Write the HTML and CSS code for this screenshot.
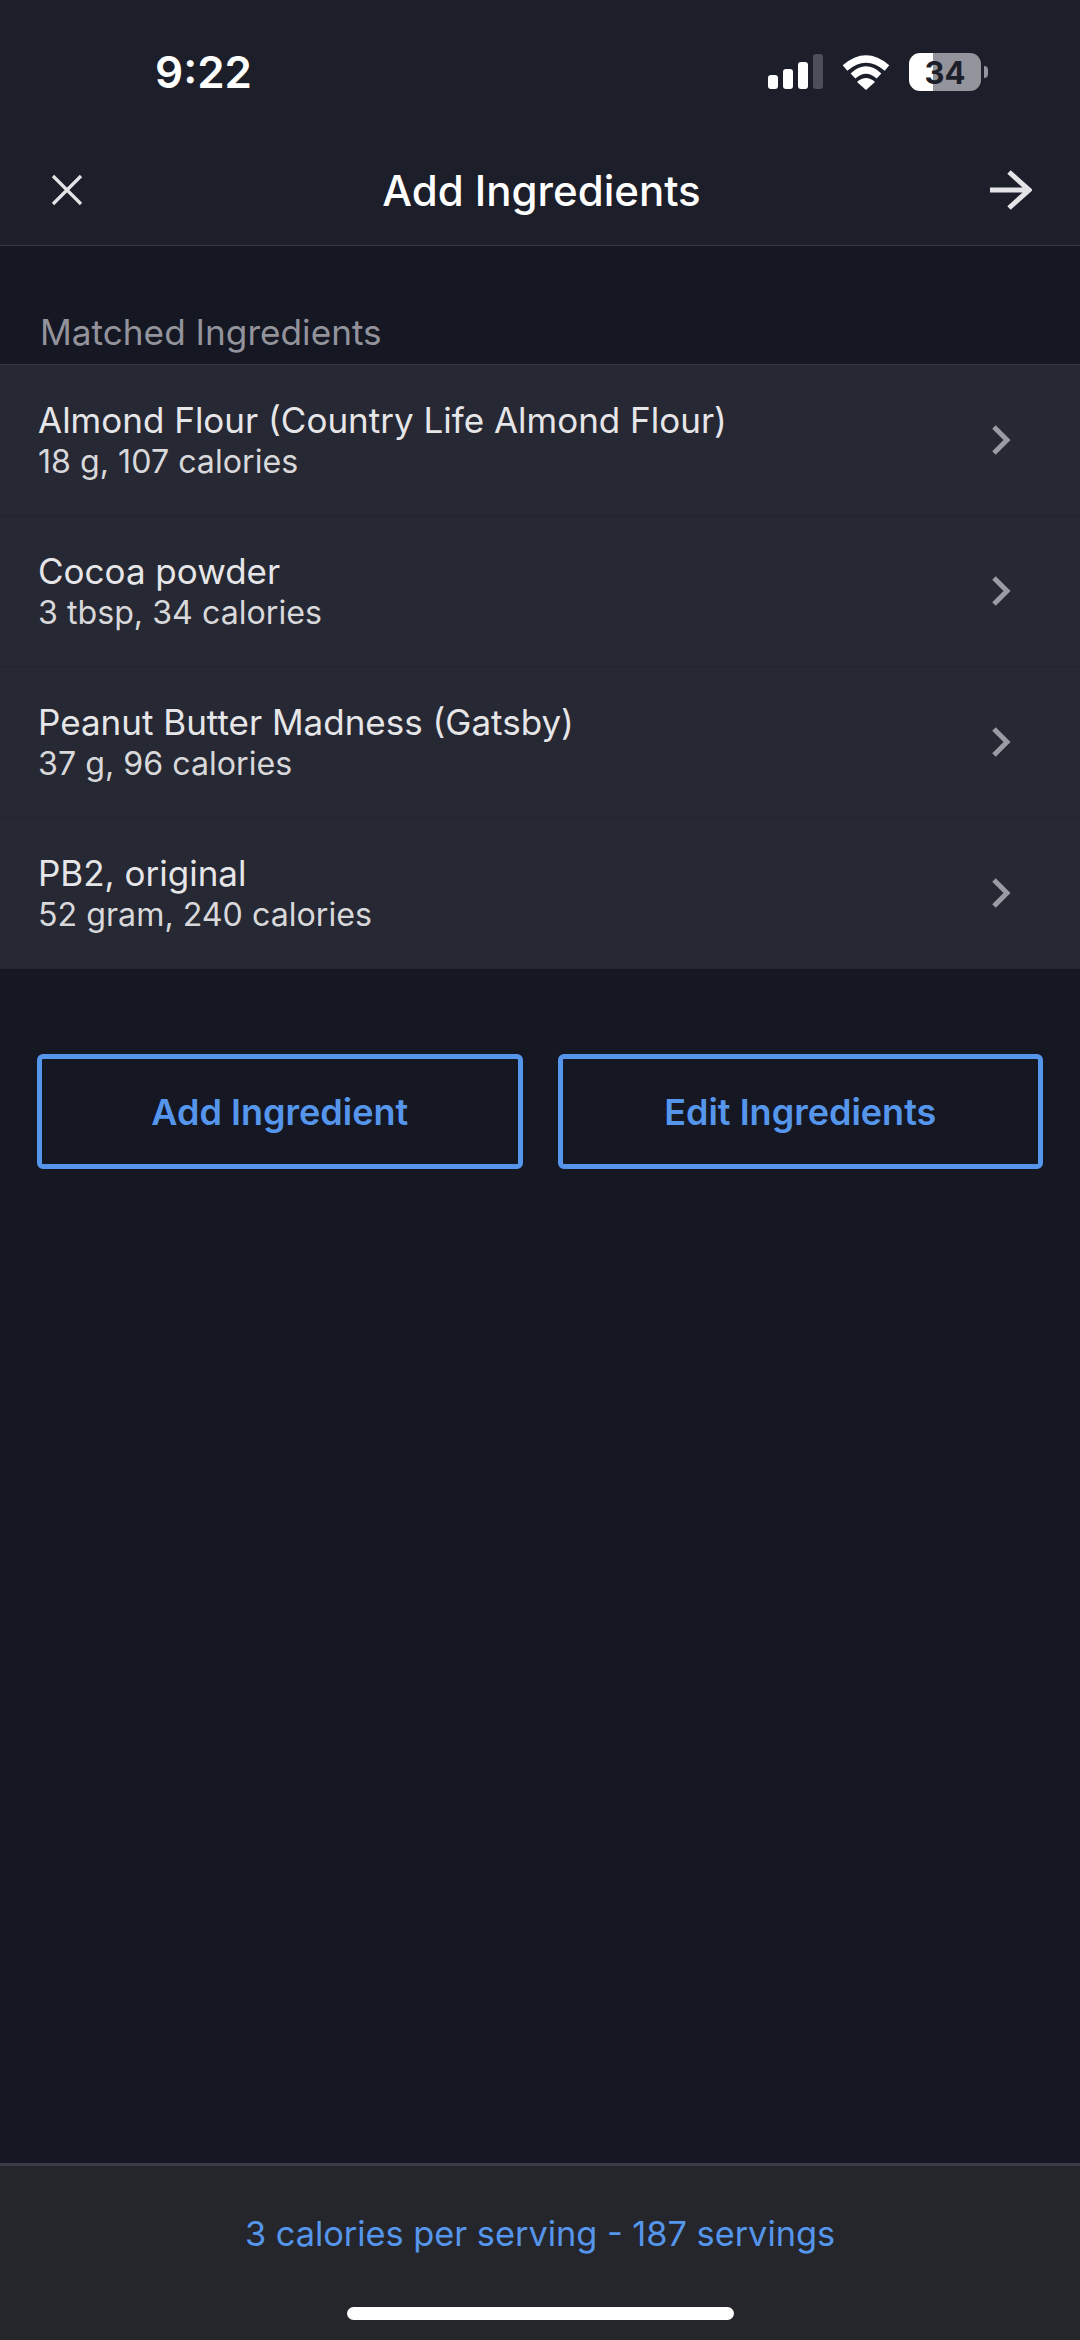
FILE: index.html
```html
<!DOCTYPE html>
<html lang="en">
    <head>
        <meta charset="utf-8">
        <meta name="viewport" content="width=device-width, initial-scale=1.0">
        <title>Add Ingredients</title>
        <link rel="stylesheet" href="styles.css">
    </head>
    <body>
        <header class="top">
            <div class="status">
                <span class="time">9:22</span>
                <div class="status-icons">
                    <svg class="signal" width="55" height="36" viewBox="0 0 55 36">
                        <rect x="0" y="21" width="10" height="14" rx="3" fill="#fff"/>
                        <rect x="15" y="15" width="10" height="20" rx="3" fill="#fff"/>
                        <rect x="30" y="8" width="10" height="27" rx="3" fill="#fff"/>
                        <rect x="45" y="0" width="10" height="35" rx="3" fill="#4d4e59"/>
                    </svg>
                    <svg class="wifi" width="48" height="36" viewBox="0 0 48 36">
                        <path d="M3 14 Q24 -4 45 14" fill="none" stroke="#fff" stroke-width="7"/>
                        <path d="M11 22 Q24 10 37 22" fill="none" stroke="#fff" stroke-width="7"/>
                        <path d="M15 28 Q24 20 33 28 L24 36 Z" fill="#fff"/>
                    </svg>
                    <div class="battery">
                        <div class="battery-body"><span>34</span></div>
                        <div class="battery-cap"></div>
                    </div>
                </div>
            </div>
            <nav class="nav">
                <svg class="nav-close" width="32" height="32" viewBox="0 0 32 32">
                    <path d="M2 2 L30 30 M30 2 L2 30" stroke="#e4e4e7" stroke-width="3.2" fill="none"/>
                </svg>
                <h1>Add Ingredients</h1>
                <svg class="nav-next" width="42" height="40" viewBox="0 0 42 40">
                    <path d="M0 20 H39 M19 2 L39 20 L19 38" stroke="#e4e4e7" stroke-width="5" fill="none"/>
                </svg>
            </nav>
        </header>
        <main class="content">
            <h2 class="section-title">Matched Ingredients</h2>
            <ul class="list">
                <li class="row">
                    <div>
                        <p class="name">Almond Flour (Country Life Almond Flour)</p>
                        <p class="detail">18 g, 107 calories</p>
                    </div>
                    <svg class="chevron" width="20" height="32" viewBox="0 0 20 32">
                        <path d="M3 3 L16 16 L3 29" stroke="#9a9ba3" stroke-width="5" fill="none"/>
                    </svg>
                </li>
                <li class="row">
                    <div>
                        <p class="name">Cocoa powder</p>
                        <p class="detail">3 tbsp, 34 calories</p>
                    </div>
                    <svg class="chevron" width="20" height="32" viewBox="0 0 20 32">
                        <path d="M3 3 L16 16 L3 29" stroke="#9a9ba3" stroke-width="5" fill="none"/>
                    </svg>
                </li>
                <li class="row">
                    <div>
                        <p class="name">Peanut Butter Madness (Gatsby)</p>
                        <p class="detail">37 g, 96 calories</p>
                    </div>
                    <svg class="chevron" width="20" height="32" viewBox="0 0 20 32">
                        <path d="M3 3 L16 16 L3 29" stroke="#9a9ba3" stroke-width="5" fill="none"/>
                    </svg>
                </li>
                <li class="row">
                    <div>
                        <p class="name">PB2, original</p>
                        <p class="detail">52 gram, 240 calories</p>
                    </div>
                    <svg class="chevron" width="20" height="32" viewBox="0 0 20 32">
                        <path d="M3 3 L16 16 L3 29" stroke="#9a9ba3" stroke-width="5" fill="none"/>
                    </svg>
                </li>
            </ul>
            <div class="actions">
                <button class="action">Add Ingredient</button>
                <button class="action">Edit Ingredients</button>
            </div>
        </main>
        <footer class="summary">
            <p>3 calories per serving - 187 servings</p>
            <div class="home-bar"></div>
        </footer>
    </body>
</html>
```

FILE: styles.css
```css
* {
    box-sizing: border-box;
    margin: 0;
    padding: 0;
}
body {
    width: 1080px;
    height: 2340px;
    display: flex;
    flex-direction: column;
    overflow: hidden;
    font-family: Inter, "Liberation Sans", sans-serif;
    background: #151723;
}
.top {
    height: 246px;
    background: #1c1e2a;
    border-bottom: 1px solid #353743;
}
.status {
    height: 144px;
    padding: 0 92px 0 155px;
    display: flex;
    justify-content: space-between;
    align-items: center;
}
.time {
    font-size: 44px;
    font-weight: 600;
    color: #fff;
}
.status-icons {
    display: flex;
    align-items: center;
    gap: 19px;
}
.battery {
    display: flex;
    align-items: center;
    gap: 3px;
}
.battery-body {
    width: 72px;
    height: 38px;
    border-radius: 11px;
    background: linear-gradient(90deg, #fff 0 34%, #94949c 34%);
    display: flex;
    align-items: center;
    justify-content: center;
    font-size: 31px;
    font-weight: 700;
    color: #1c1e2a;
}
.battery-cap {
    width: 4px;
    height: 12px;
    background: #94949c;
    border-radius: 0 4px 4px 0;
}
.nav {
    height: 101px;
    padding: 0 48px 9px 51px;
    display: grid;
    grid-template-columns: 1fr auto 1fr;
    align-items: center;
}
.nav-next {
    justify-self: end;
}
.nav h1 {
    font-size: 42px;
    font-weight: 500;
    color: #fff;
}
.content {
    flex: 1;
}
.section-title {
    height: 118px;
    padding: 64px 40px 0;
    font-size: 35.2px;
    font-weight: 400;
    line-height: 44px;
    color: #92939b;
}
.list {
    list-style: none;
    border-top: 1px solid #353743;
}
.row {
    height: 151px;
    padding: 0 69px 0 38px;
    display: flex;
    justify-content: space-between;
    align-items: center;
    background: #262833;
    border-bottom: 1px solid #22242e;
}
.name {
    font-size: 35px;
    line-height: 42px;
    color: #e6e6e9;
}
.detail {
    font-size: 32.2px;
    line-height: 40px;
    margin-top: 1px;
    color: #d8d8db;
}
.actions {
    display: flex;
    gap: 35px;
    padding: 85px 37px 0 37px;
}
.action {
    flex: 1;
    height: 115px;
    background: transparent;
    border: 5px solid #5596ec;
    border-radius: 6px;
    font-family: inherit;
    font-size: 36px;
    font-weight: 600;
    color: #5596ec;
}
.summary {
    height: 177px;
    background: #25262b;
    border-top: 3px solid #3b3c47;
    display: flex;
    flex-direction: column;
    align-items: center;
}
.summary p {
    margin-top: 47px;
    font-size: 34.3px;
    line-height: 42px;
    color: #5596ec;
}
.home-bar {
    margin-top: 52px;
    width: 387px;
    height: 13px;
    border-radius: 7px;
    background: #fff;
}
```
